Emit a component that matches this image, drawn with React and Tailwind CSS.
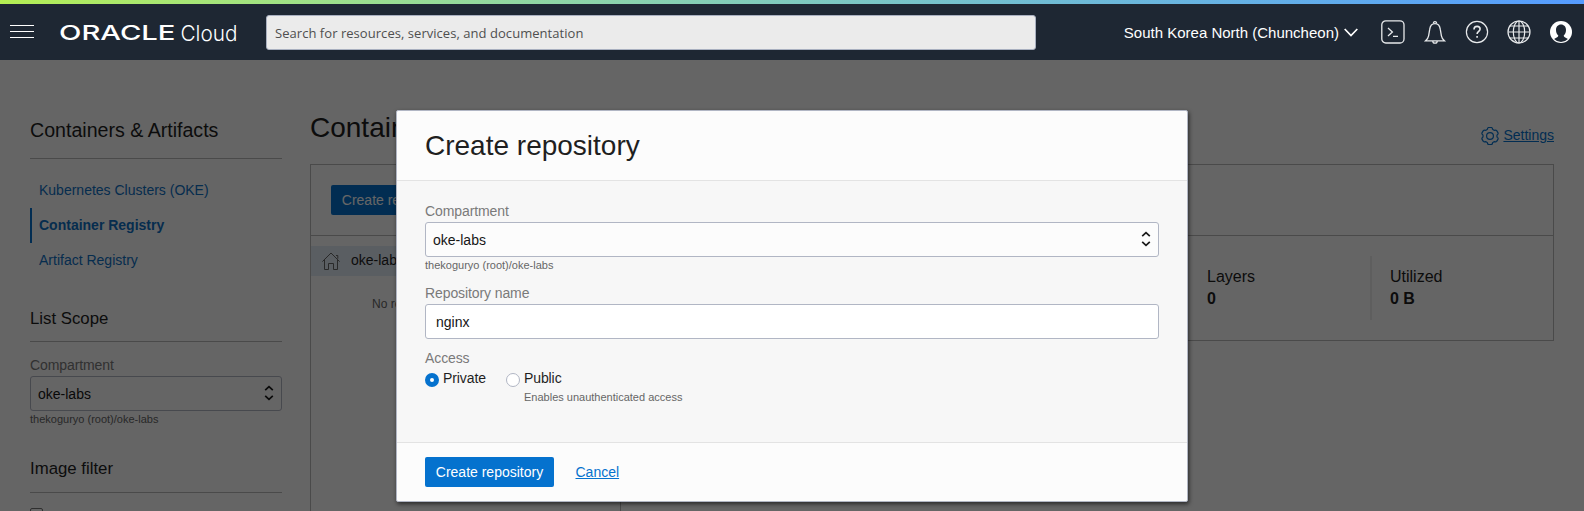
import React from "react";

function SortArrows() {
  return (
    <svg width="10" height="16" viewBox="0 0 10 16" className="-mt-px" fill="none" stroke="#1a1a1a" strokeWidth="1.7">
      <path d="M1.2 5.2 5 1.6l3.8 3.6M1.2 10.8 5 14.4l3.8-3.6" />
    </svg>
  );
}

function Select({ value }) {
  return (
    <div className="mt-px flex h-[35px] items-center justify-between rounded-[3px] border border-[#b1b6c4] bg-[#fcfcfc] pl-[7px] pr-[7px] text-[14px] leading-[33px] text-[#161616]">
      <span className="pt-[2px] leading-[31px]">{value}</span>
      <SortArrows />
    </div>
  );
}

const gearPoint = (radius, degrees) => {
  const angle = (degrees * Math.PI) / 180;
  return `${(9 + radius * Math.sin(angle)).toFixed(2)} ${(9 - radius * Math.cos(angle)).toFixed(2)}`;
};

const gearPath =
  [0, 60, 120, 180, 240, 300]
    .map((a, i) =>
      `${i === 0 ? "M" : "L"}${gearPoint(7.3, a - 20)}Q${gearPoint(8.6, a - 18)} ${gearPoint(8.6, a - 9)}L${gearPoint(8.6, a + 9)}Q${gearPoint(8.6, a + 18)} ${gearPoint(7.3, a + 20)}Q${gearPoint(6.7, a + 30)} ${gearPoint(7.3, a + 40)}`
    )
    .join("") + "Z";

function TopBar() {
  return (
    <header className="shrink-0">
      <div className="h-1 bg-linear-to-r from-[#b4ee52] to-[#559bff]" />
      <div className="flex h-14 items-center bg-[#1e2733] pl-[10px] pr-[11px]">
        <svg width="24" height="14" viewBox="0 0 24 14" className="shrink-0 -mt-px" stroke="#fff" strokeWidth="1">
          <path d="M0 .5h24M0 6.5h24M0 12.5h24" />
        </svg>
        <svg width="180" height="24" viewBox="0 0 180 24" className="ml-[25px] mt-px shrink-0" fill="#fff">
          <text x="0" y="19.4" fontFamily="Inter, sans-serif" fontWeight="500" fontSize="20.5" textLength="116.5" lengthAdjust="spacingAndGlyphs">ORACLE</text>
          <text x="121.500" y="19.6" fontFamily="Inter, sans-serif" fontWeight="300" fontSize="22" textLength="57" lengthAdjust="spacingAndGlyphs">Cloud</text>
        </svg>
        <div className="ml-[27px] h-[35px] w-[770px] shrink-0 rounded-[3px] border border-[#a9b0c0] bg-[#ebebeb] pl-2 pt-px font-['Open_Sans',sans-serif] text-[13px] leading-[33px] tracking-[0.045px] text-[#4f4f4f]">
          Search for resources, services, and documentation
        </div>
        <div className="ml-auto flex items-center text-[15px] leading-5 text-white">
          <span className="whitespace-nowrap pt-px">South Korea North (Chuncheon)</span>
          <svg width="14" height="9" viewBox="0 0 14 9" className="ml-[5px]" fill="none" stroke="#fff" strokeWidth="1.7">
            <path d="M.7 1 7 7.6 13.3 1" />
          </svg>
        </div>
        <div className="ml-[23px] flex shrink-0 items-center gap-[18px]">
          <svg width="24" height="24" viewBox="0 0 24 24" fill="none" stroke="#e8eaec" strokeWidth="1.3">
            <rect x=".8" y=".8" width="22.2" height="22.2" rx="4" />
            <path d="m7 8 4.4 4L7 16M12 16.3h5" />
          </svg>
          <svg width="24" height="24" viewBox="0 0 24 24" fill="none" stroke="#e8eaec" strokeWidth="1.3">
            <path d="M2.6 20.8c1.6-1.4 2.6-3 3-5l1.1-6.4C7.200 5.600 9.200 3.700 12 3.700s4.800 1.900 5.300 5.700l1.100 6.400c.4 2 1.400 3.600 3 5z" />
            <path d="M10.600 3.600a1.500 1.500 0 1 1 2.800 0M9.800 21a2.200 2.200 0 0 0 4.400 0" />
          </svg>
          <svg width="24" height="24" viewBox="0 0 24 24" fill="none" stroke="#e8eaec" strokeWidth="1.2">
            <circle cx="12" cy="12" r="10.600" />
            <path strokeWidth="1.600" d="M9 9.400c0-1.900 1.200-3 3.100-3s3 1 3 2.700c0 2.300-3 2.300-3 5M12.100 15.900v1.800" />
          </svg>
          <svg width="24" height="24" viewBox="0 0 24 24" fill="none" stroke="#e8eaec" strokeWidth="1.200">
            <circle cx="12" cy="12" r="11" />
            <ellipse cx="12" cy="12" rx="5.700" ry="11" />
            <path d="M12 1v22M1 12h22M2.800 6h18.400M2.800 18h18.400" />
          </svg>
          <svg width="24" height="24" viewBox="0 0 24 24">
            <circle cx="12" cy="12" r="11" fill="#fff" />
            <path fill="#1e2733" d="M12 4.500c3 0 5 2.300 5 5.500 0 2.200-.9 4.400-2.300 5.600 0 1.600 1.600 2 4.200 3.300A10 10 0 0 1 12 22a10 10 0 0 1-6.900-3.100c2.600-1.300 4.200-1.700 4.200-3.300C7.900 14.400 7 12.200 7 10c0-3.200 2-5.500 5-5.500z" />
          </svg>
        </div>
      </div>
    </header>
  );
}

function Sidebar() {
  return (
    <aside className="w-[252px] shrink-0 pt-[58px]">
      <h2 className="border-b border-[#b9b9b9] pb-4 text-[19.6px] leading-6">Containers &amp; Artifacts</h2>
      <nav className="mt-[14px] text-[14px] leading-[35px] text-[#0f70c4]">
        <a className="block pl-[9px]">Kubernetes Clusters (OKE)</a>
        <a className="block border-l-2 border-[#0572ce] pl-[7px] font-bold">Container Registry</a>
        <a className="block pl-[9px]">Artifact Registry</a>
      </nav>
      <h3 className="mt-[31px] border-b border-[#b9b9b9] pb-3 text-[16.8px] leading-5">List Scope</h3>
      <div className="mt-[13px] text-[14px] leading-5 tracking-[-0.1px] text-[#7a7a7a]">Compartment</div>
      <Select value="oke-labs" />
      <div className="mt-px text-[11px] leading-[14px] text-[#666]">thekoguryo (root)/oke-labs</div>
      <h3 className="mt-[33px] border-b border-[#b9b9b9] pb-[13px] text-[16.8px] leading-5">Image filter</h3>
      <div className="mt-[15px] h-[13px] w-[13px] rounded-[2px] border border-[#767676]" />
    </aside>
  );
}

function Stat({ label, value, divided }) {
  return (
    <div className={divided ? "h-16 w-[183px] border-l-2 border-[#eaeaea] pl-[18px] pt-[10px]" : "h-16 w-[183px] pl-5 pt-[10px]"}>
      <div>{label}</div>
      <div className="font-bold">{value}</div>
    </div>
  );
}

function Registry() {
  return (
    <main className="ml-7 w-[1244px] shrink-0 pt-[51px]">
      <div className="flex items-start justify-between">
        <h1 className="text-[28px] leading-[34px]">Container Registry</h1>
        <a className="mt-[14px] flex text-[14px] leading-5 text-[#0572ce]">
          <svg width="18" height="18" viewBox="0 0 18 18" className="mr-[4px] mt-[2px]" fill="none" stroke="currentColor" strokeWidth="1.200">
            <path strokeLinejoin="round" d={gearPath} />
            <circle cx="9" cy="9" r="3.400" />
          </svg>
          <span className="underline">Settings</span>
        </a>
      </div>
      <div className="mt-[19px] h-[71px] border border-b-0 border-[#b9b9b9] pl-5 pt-5">
        <button className="h-[30px] w-[129px] rounded-[2px] bg-[#0572ce] text-[14px] leading-[30px] text-white">Create repository</button>
      </div>
      <div className="flex items-start">
        <div className="h-[320px] w-[311px] border border-[#b9b9b9] pt-[10px]">
          <div className="flex h-[30px] items-center bg-[#e2eaf5] pl-[11px] text-[14px] leading-[30px]">
            <svg width="18" height="18" viewBox="0 0 18 18" className="-mt-px mr-[11px]" fill="none" stroke="#666" strokeWidth="1">
              <path d="M.4 9.600 9 1l8.600 8.600M2.500 8v9.500h4v-6h5v6h4V8M14 3.500h1.800v3.200" />
            </svg>
            <span className="pb-px leading-[29px]">oke-labs</span>
          </div>
          <div className="mt-5 pl-[61px] text-[12px] leading-4 text-[#666]">No repositories exist</div>
        </div>
        <div className="flex h-[106px] grow justify-end border border-l-0 border-[#b9b9b9] pt-5 text-[16px] leading-[22px]">
          <Stat label="Layers" value="0" />
          <Stat label="Utilized" value="0 B" divided />
        </div>
      </div>
    </main>
  );
}

function Dialog() {
  return (
    <div className="flex h-[392px] w-[792px] flex-col rounded-[2px] border border-[#b1b6c4] bg-[#fcfcfc] shadow-[1px_2px_4px_rgba(0,0,0,0.6)]">
      <h1 className="h-[70px] border-b border-[#e3e3e3] pl-7 pt-[18px] text-[28px] leading-[34px]">Create repository</h1>
      <div className="h-[262px] border-b border-[#e3e3e3] bg-[#f7f7f7] px-7 pt-5">
        <div className="text-[14px] leading-5 tracking-[-0.1px] text-[#7a7a7a]">Compartment</div>
        <Select value="oke-labs" />
        <div className="mt-px text-[11px] leading-[14px] text-[#666]">thekoguryo (root)/oke-labs</div>
        <div className="mt-[11px] text-[14px] leading-5 tracking-[-0.1px] text-[#7a7a7a]">Repository name</div>
        <div className="mt-px h-[35px] rounded-[3px] border border-[#b1b6c4] bg-white pl-[10px] pt-px text-[14px] leading-[33px] text-[#161616]">nginx</div>
        <div className="mt-[9px] text-[14px] leading-5 tracking-[-0.1px] text-[#7a7a7a]">Access</div>
        <div className="flex text-[14px] leading-5">
          <div className="mt-[5px] h-[14px] w-[14px] rounded-full border-[5px] border-[#0572ce] bg-white" />
          <span className="ml-1 w-[63px] tracking-[-0.1px]">Private</span>
          <div className="mt-[5px] h-[14px] w-[14px] rounded-full border border-[#b1b6c4] bg-white" />
          <div className="ml-1">
            <div className="tracking-[-0.1px]">Public</div>
            <div className="mt-[2px] text-[11px] leading-[14px] text-[#666]">Enables unauthenticated access</div>
          </div>
        </div>
      </div>
      <div className="flex pl-7 pt-[14px] text-[14px] leading-[30px]">
        <button className="h-[30px] w-[129px] rounded-[2px] bg-[#0572ce] text-white">Create repository</button>
        <a className="ml-[21.5px] text-[#0572ce] underline">Cancel</a>
      </div>
    </div>
  );
}

export default function App() {
  return (
    <div className="flex h-[511px] w-[1584px] flex-col overflow-hidden bg-[#fcfcfc] font-['Liberation_Sans',Arial,sans-serif] text-[#1f1f1f]">
      <TopBar />
      <div className="relative flex h-[451px] overflow-hidden pl-[30px]">
        <Sidebar />
        <Registry />
        <div className="absolute inset-0 flex items-start justify-center bg-black/60 pt-[50px]">
          <Dialog />
        </div>
      </div>
    </div>
  );
}
